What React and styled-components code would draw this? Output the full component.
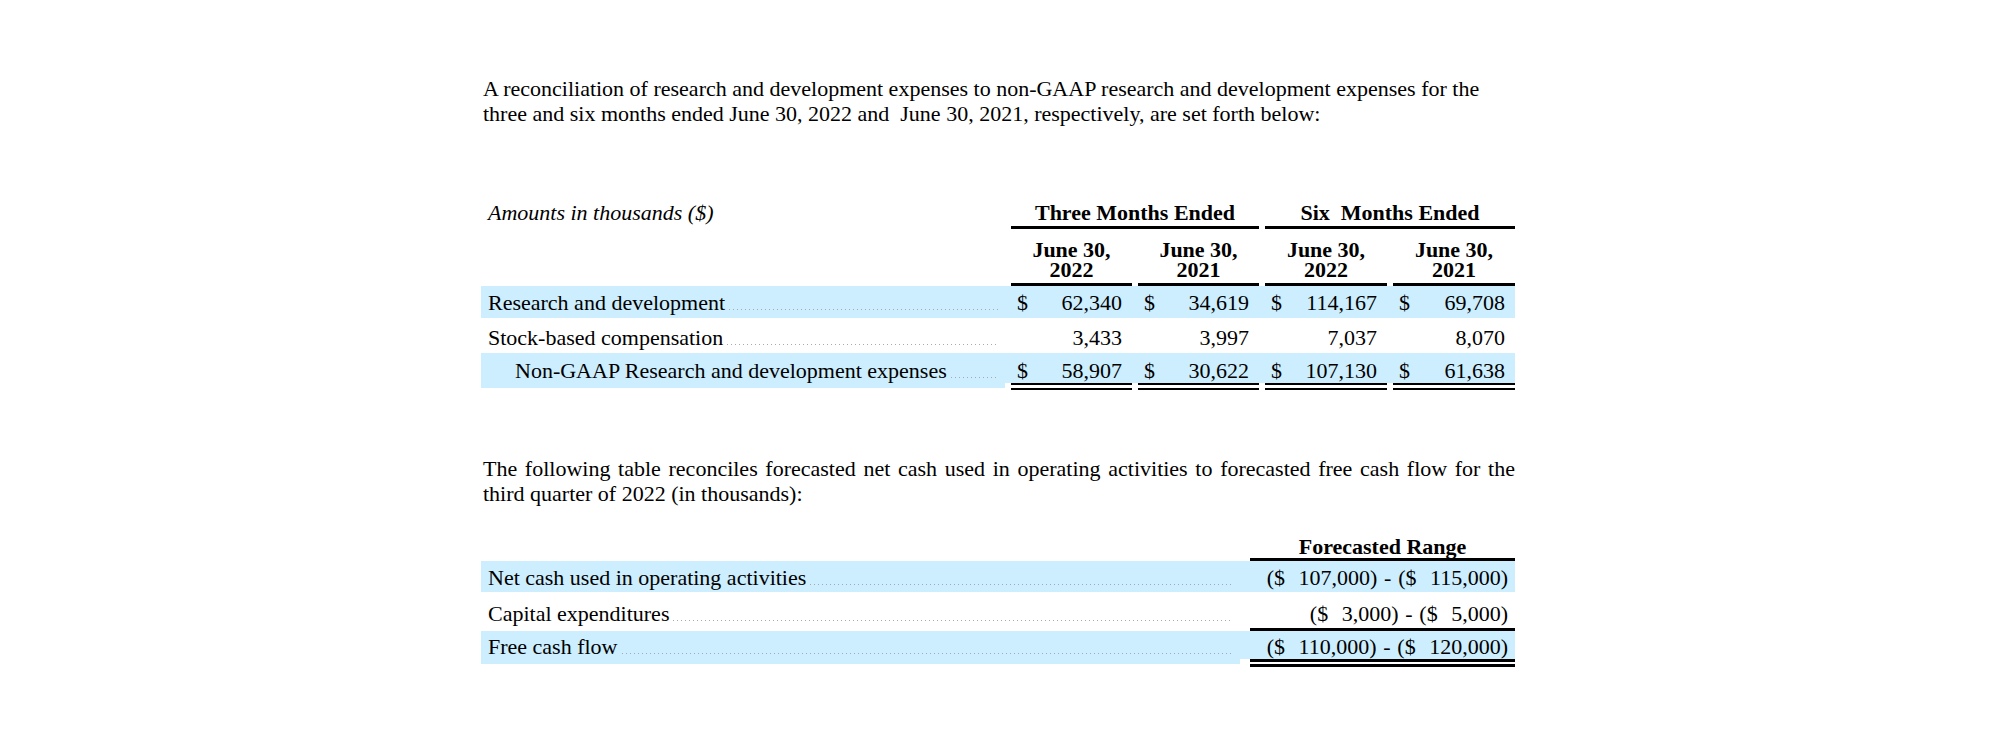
import React from "react";
import styled, { createGlobalStyle, css } from "styled-components";

const SHADE = "#cceeff";

const GlobalStyle = createGlobalStyle`
  html, body {
    margin: 0;
    background: #fff;
  }
  body {
    font-family: "Liberation Serif", "Times New Roman", serif;
    color: #000;
  }
`;

const Page = styled.main`
  width: 1034px;
  margin-left: 481px;
  padding-top: 76px;
`;

const Para = styled.p`
  margin: 0 0 ${(p) => p.$after}px;
  padding-left: 2px;
  font-size: 22px;
  line-height: 25px;
  text-align: ${(p) => (p.$justify ? "justify" : "left")};
`;

const Table = styled.section`
  margin-bottom: ${(p) => p.$after || 0}px;
  font-size: 22px;
`;

const Row = styled.div`
  display: grid;
  grid-template-columns: ${(p) => p.$cols};
  column-gap: ${(p) => p.$gap}px;
  ${(p) =>
    p.$shade &&
    css`
      background: linear-gradient(${SHADE}, ${SHADE}) top left /
        100% ${p.$total ? `calc(100% - ${p.$total}px)` : "100%"} no-repeat;
    `}
`;

const Caption = styled.div`
  padding-left: 7px;
  font-style: italic;
  line-height: 24px;
`;

const GroupHead = styled.div`
  grid-column: span ${(p) => p.$span || 1};
  font-weight: bold;
  text-align: center;
  line-height: ${(p) => p.$lh || 24}px;
  padding-bottom: ${(p) => p.$pb || 0}px;
  border-bottom: 3px solid #000;
`;

const ColHead = styled.div`
  font-weight: bold;
  text-align: center;
  line-height: 20px;
  padding: 11px 0 3px;
  border-bottom: 3px solid #000;
`;

const Label = styled.div`
  display: flex;
  align-items: baseline;
  padding: ${(p) => p.$pt}px 7px ${(p) => p.$pb}px ${(p) => 7 + (p.$indent || 0)}px;
  line-height: 24px;
  white-space: nowrap;
  ${(p) =>
    p.$fill &&
    css`
      background: linear-gradient(${SHADE}, ${SHADE}) top left / 100% calc(100% - ${p.$fill}px) no-repeat;
    `}
`;

const Leader = styled.span`
  flex: 1;
  height: 2px;
  margin-left: 4px;
  background-image: linear-gradient(to right, #a9a9a9 0 1.5px, transparent 1.5px);
  background-size: 4px 1.5px;
  background-repeat: repeat-x;
  background-position: left bottom;
`;

const Amount = styled.div`
  display: flex;
  justify-content: space-between;
  padding: ${(p) => p.$pt}px 10px ${(p) => p.$pb}px 6px;
  line-height: 24px;
  ${(p) => p.$rule === "double" && "border-bottom: 7px double #000;"}
`;

const Range = styled.div`
  text-align: right;
  padding: ${(p) => p.$pt}px 7px ${(p) => p.$pb}px 0;
  line-height: 24px;
  white-space: pre;
  word-spacing: 1.25px;
  ${(p) => p.$rule === "single" && "border-bottom: 3px solid #000;"}
  ${(p) => p.$rule === "double" && "border-bottom: 8px double #000;"}
`;

const RD_COLS = "1fr 121px 121px 122px 122px";
const FC_COLS = "1fr 265px";

const rdRows = [
  {
    label: "Research and development",
    shade: true,
    pt: 5,
    pb: 3,
    values: ["62,340", "34,619", "114,167", "69,708"],
    dollar: true,
  },
  {
    label: "Stock-based compensation",
    pt: 8,
    pb: 3,
    values: ["3,433", "3,997", "7,037", "8,070"],
  },
  {
    label: "Non-GAAP Research and development expenses",
    shade: true,
    total: true,
    indent: 27,
    pt: 6,
    pb: 0,
    values: ["58,907", "30,622", "107,130", "61,638"],
    dollar: true,
  },
];

const fcRows = [
  {
    label: "Net cash used in operating activities",
    shade: true,
    pt: 5,
    pb: 2,
    value: "($  107,000) - ($  115,000)",
  },
  {
    label: "Capital expenditures",
    pt: 10,
    pb: 2,
    rule: "single",
    value: "($  3,000) - ($  5,000)",
  },
  {
    label: "Free cash flow",
    shade: true,
    total: true,
    pt: 4,
    pb: 0,
    rule: "double",
    value: "($  110,000) - ($  120,000)",
  },
];

const years = ["2022", "2021", "2022", "2021"];

const App = () => (
  <>
    <GlobalStyle />
    <Page>
      <Para $after={75}>
        A reconciliation of research and development expenses to non-GAAP research and development
        expenses for the three and six months ended June 30, 2022 and{"\u00a0"} June 30, 2021,
        respectively, are set forth below:
      </Para>

      <Table $after={66}>
        <Row $cols={RD_COLS} $gap={6}>
          <Caption>Amounts in thousands ($)</Caption>
          <GroupHead $span={2} $pb={1}>
            Three Months Ended
          </GroupHead>
          <GroupHead $span={2} $pb={1}>
            Six{"\u00a0"} Months Ended
          </GroupHead>
        </Row>
        <Row $cols={RD_COLS} $gap={6}>
          <div />
          {years.map((y, i) => (
            <ColHead key={i}>
              June 30,
              <br />
              {y}
            </ColHead>
          ))}
        </Row>
        {rdRows.map((r) => (
          <Row key={r.label} $cols={RD_COLS} $gap={6} $shade={r.shade} $total={r.total ? 7 : 0}>
            <Label $pt={r.pt} $pb={r.pb} $indent={r.indent} $fill={r.total ? 2 : 0}>
              {r.label}
              <Leader />
            </Label>
            {r.values.map((v, i) => (
              <Amount key={i} $pt={r.pt} $pb={r.pb} $rule={r.total ? "double" : null}>
                <span>{r.dollar ? "$" : ""}</span>
                <span>{v}</span>
              </Amount>
            ))}
          </Row>
        ))}
      </Table>

      <Para $justify $after={30}>
        The following table reconciles forecasted net cash used in operating activities to
        forecasted free cash flow for the third quarter of 2022 (in thousands):
      </Para>

      <Table>
        <Row $cols={FC_COLS} $gap={10}>
          <div />
          <GroupHead $lh={22}>Forecasted Range</GroupHead>
        </Row>
        {fcRows.map((r) => (
          <Row key={r.label} $cols={FC_COLS} $gap={10} $shade={r.shade} $total={r.total ? 8 : 0}>
            <Label $pt={r.pt} $pb={r.pb} $fill={r.total ? 3 : 0}>
              {r.label}
              <Leader />
            </Label>
            <Range $pt={r.pt} $pb={r.pb} $rule={r.rule}>
              {r.value}
            </Range>
          </Row>
        ))}
      </Table>
    </Page>
  </>
);

export default App;
